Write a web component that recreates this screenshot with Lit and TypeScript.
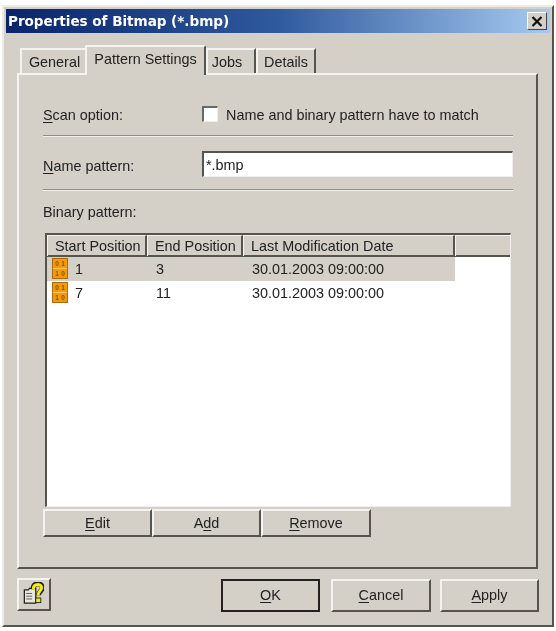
import { LitElement, html, css, svg } from "lit";
import { customElement } from "lit/decorators.js";

const bitIcon = svg`<svg class="bit" width="16" height="21" viewBox="0 0 16 21">
  <rect x="0.5" y="0.5" width="15" height="20" fill="#f59a00" stroke="#a86a10"/>
  <path d="M1 10.5H15" stroke="#ffc860"/>
  <g font-family="Liberation Sans, sans-serif" font-size="6.5" font-weight="700" fill="#7a5210" text-anchor="middle">
    <text x="5" y="8">0</text><text x="11" y="8">1</text><text x="5" y="17.5">1</text><text x="11" y="17.5">0</text>
  </g>
</svg>`;

const helpIcon = svg`<svg class="helpicon" width="21" height="22" viewBox="0 0 23 24">
  <path d="M1.5 8.5H6L7 7H14V23H1.5Z" fill="#e8e6df" stroke="#222" stroke-width="1.4"/>
  <path d="M3.5 12.5H10M3.5 15.5H10M3.5 18.5H10" stroke="#555"/>
  <path d="M11 8C11 3.5 13.5 2 16.5 2C19.5 2 21.2 4 21.2 6.5C21.2 10 17 10 17 14.5" fill="none" stroke="#222" stroke-width="5.4"/>
  <path d="M11.3 8C11.3 4 14 2.6 16.5 2.6C18.9 2.6 20.4 4.4 20.4 6.5C20.4 9.5 16.5 10 16.5 14.5" fill="none" stroke="#f4f000" stroke-width="3.2"/>
  <rect x="14" y="17.5" width="5.5" height="5" fill="#f4f000" stroke="#222"/>
</svg>`;

@customElement("app-root")
export class AppRoot extends LitElement {
  static styles = css`
    :host { display: block; width: 556px; height: 631px; background: #fff; overflow: hidden;
      font-family: "Liberation Sans", Arial, sans-serif; font-size: 14.4px; color: #222; }
    .win { box-sizing: border-box; margin: 5px 0 0 2px; width: 552px; height: 622px; background: #d4d0c8; filter: blur(0.35px);
      border-top: 2px solid #ecebe6; border-left: 2px solid #ecebe6; border-right: 2px solid #55554f; border-bottom: 2px solid #55554f;
      padding: 2px 2px 0 2px; display: flex; flex-direction: column; }
    .title { height: 24px; flex: none; display: flex; align-items: center; justify-content: space-between; padding: 0 3px 0 2px;
      background: linear-gradient(90deg, #0a246a 0%, #2f5a9e 50%, #a6caf0 100%); }
    .title b { font-family: "DejaVu Sans", sans-serif; font-size: 13.6px; color: #fff; letter-spacing: -0.05px; }
    .close { box-sizing: border-box; width: 20px; height: 18px; background: #d4d0c8; display: flex; align-items: center; justify-content: center;
      border-top: 1px solid #fff; border-left: 1px solid #fff; border-right: 1px solid #444; border-bottom: 1px solid #444; }
    .tabs { display: flex; align-items: flex-end; height: 40px; flex: none; padding-left: 14px; position: relative; z-index: 1; }
    .tab { box-sizing: border-box; height: 25px; padding-top: 4px; text-align: center; border-top: 2px solid #f4f3ef; border-left: 2px solid #f4f3ef; border-right: 2px solid #55554f; }
    .tab.active { height: 30px; margin-bottom: -2px; padding-top: 4px; background: #d4d0c8; border-radius: 2px 2px 0 0; }
    .tab.general { width: 65px; padding-left: 2px; border-right: none; }
    .tab.pattern { width: 121px; }
    .tab.jobs { width: 50px; padding-right: 8px; }
    .tab.details { width: 60px; }
    .pane { box-sizing: border-box; width: 521px; height: 496px; margin-left: 11px; flex: none; padding: 0 23px 0 24px;
      border-top: 2px solid #f4f3ef; border-left: 2px solid #f4f3ef; border-right: 2px solid #55554f; border-bottom: 2px solid #55554f; }
    .row { display: flex; align-items: center; }
    .label { width: 159px; flex: none; }
    .name .label { margin-top: 4px; }
    u { text-decoration-thickness: 1px; text-underline-offset: 2px; }
    .scan { height: 60px; padding-top: 20px; box-sizing: border-box; }
    .check { box-sizing: border-box; width: 16px; height: 16px; margin: -3px 8px 0 0; background: #fff;
      border-top: 2px solid #6a6a64; border-left: 2px solid #6a6a64; border-right: 1px solid #eee; border-bottom: 1px solid #eee; }
    .sep { height: 2px; background: linear-gradient(#8f8d86 50%, #f2f1ec 50%); }
    .name { height: 52px; padding-top: 2px; box-sizing: border-box; }
    .input { box-sizing: border-box; width: 311px; height: 26px; background: #fff; padding: 4px 0 0 2px;
      border-top: 2px solid #55554f; border-left: 2px solid #55554f; border-right: 1px solid #eee; border-bottom: 1px solid #eee; }
    .bp { height: 42px; display: flex; align-items: center; box-sizing: border-box; }
    .list { box-sizing: border-box; margin-left: 2px; width: 466px; height: 274px; background: #fff;
      border-top: 2px solid #55554f; border-left: 2px solid #55554f; border-right: 1px solid #eee; border-bottom: 1px solid #eee; }
    .head { box-sizing: border-box; display: grid; grid-template-columns: 100px 96px 212px 1fr; height: 22px; background: #d4d0c8; border-bottom: 2px solid #55554f; }
    .head div { box-sizing: border-box; padding-left: 7px; line-height: 20px; border-top: 1px solid #f4f3ef; border-left: 1px solid #f4f3ef; border-right: 2px solid #55554f; white-space: nowrap; }
    .head div:last-child { border-right: none; }
    .line { display: grid; grid-template-columns: 100px 96px 212px; width: 408px; height: 23.5px; line-height: 25px; }
    .line.sel { background: #d4d0c8; }
    .line > div { padding-left: 9px; white-space: nowrap; }
    .line > .first { display: flex; align-items: center; padding-left: 5px; gap: 7px; height: 23px; }
    .first span { margin-top: 2px; }
    .bit { flex: none; }
    .btns { display: flex; margin-top: 2px; }
    .btn { box-sizing: border-box; background: #d4d0c8; text-align: center; border-top: 2px solid #f4f3ef; border-left: 2px solid #f4f3ef;
      border-right: 2px solid #55554f; border-bottom: 2px solid #55554f; }
    .small { width: 109px; height: 28px; line-height: 24px; }
    .small.wide { width: 110px; }
    .foot { display: flex; align-items: flex-start; padding: 9px 0 0 11px; }
    .help { width: 34px; height: 33px; margin-right: 170px; display: flex; align-items: center; justify-content: center; }
    .helpicon { margin-bottom: 4px; margin-right: 1px; }
    .big { width: 99px; height: 33px; line-height: 29px; margin: 1px 11px 0 0; }
    .big.def { border: 2px solid #222; }
    .big.cancel { width: 100px; margin-right: 9px; }
    .big.last { margin-right: 0; }
  `;

  render() {
    return html`<div class="win">
      <div class="title"><b>Properties of Bitmap (*.bmp)</b>
        <div class="close"><svg width="12" height="11" viewBox="0 0 12 11"><path d="M1.5 1L10.5 10M10.5 1L1.5 10" stroke="#111" stroke-width="2.2"/></svg></div>
      </div>
      <div class="tabs">
        <div class="tab general">General</div>
        <div class="tab active pattern">Pattern Settings</div>
        <div class="tab jobs">Jobs</div>
        <div class="tab details">Details</div>
      </div>
      <div class="pane">
        <div class="row scan"><div class="label"><u>S</u>can option:</div><div class="check"></div><div>Name and binary pattern have to match</div></div>
        <div class="sep"></div>
        <div class="row name"><div class="label"><u>N</u>ame pattern:</div><div class="input">*.bmp</div></div>
        <div class="sep"></div>
        <div class="bp">Binary pattern:</div>
        <div class="list">
          <div class="head"><div>Start Position</div><div>End Position</div><div>Last Modification Date</div><div></div></div>
          <div class="line sel"><div class="first">${bitIcon}<span>1</span></div><div>3</div><div>30.01.2003 09:00:00</div></div>
          <div class="line"><div class="first">${bitIcon}<span>7</span></div><div>11</div><div>30.01.2003 09:00:00</div></div>
        </div>
        <div class="btns">
          <div class="btn small"><u>E</u>dit</div>
          <div class="btn small">A<u>d</u>d</div>
          <div class="btn small wide"><u>R</u>emove</div>
        </div>
      </div>
      <div class="foot">
        <div class="btn help">${helpIcon}</div>
        <div class="btn big def"><u>O</u>K</div>
        <div class="btn big cancel"><u>C</u>ancel</div>
        <div class="btn big last"><u>A</u>pply</div>
      </div>
    </div>`;
  }
}
